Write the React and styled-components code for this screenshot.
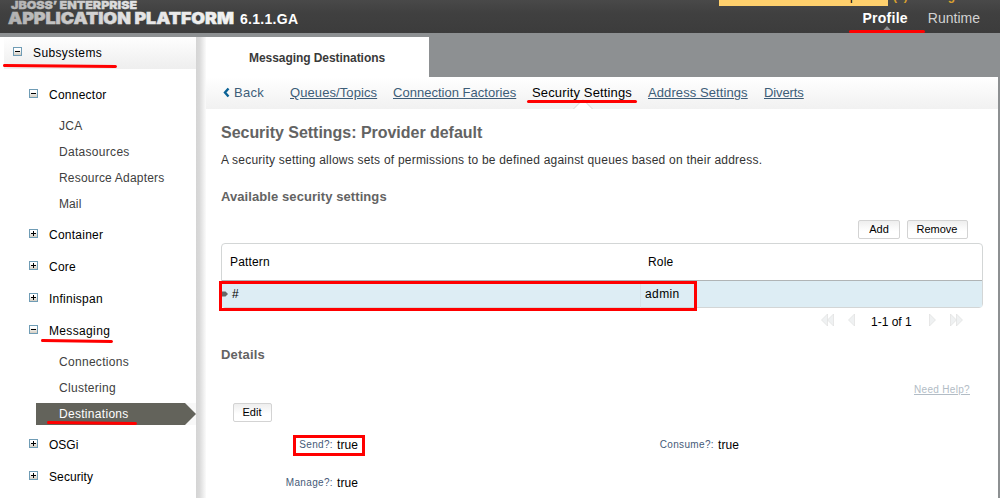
import React from "react";
import styled, { createGlobalStyle } from "styled-components";

const Global = createGlobalStyle`
  *, *::before, *::after { box-sizing: border-box; }
  body { margin: 0; font-family: "Liberation Sans", Arial, sans-serif; font-size: 12px; color: #000; background: #fff; }
  a { color: inherit; }
`;

const Page = styled.div`
  width: 1000px;
  height: 498px;
  overflow: hidden;
  display: flex;
  flex-direction: column;
`;

const Header = styled.header`
  position: relative;
  flex: none;
  height: 33px;
  display: flex;
  justify-content: space-between;
  background: linear-gradient(#494949, #404040 40%, #3c3c3c);
`;

const Brand = styled.svg`
  display: block;
  width: 320px;
  height: 33px;
`;

const Notice = styled.div`
  position: absolute;
  left: 719px;
  top: -10px;
  width: 169px;
  height: 16px;
  background: #ffd06d;
  line-height: 12px;
  padding-left: 131px;
  overflow: hidden;
`;

const Messages = styled.div`
  position: absolute;
  left: 893px;
  top: -11px;
  font-size: 12px;
  line-height: 14px;
  font-weight: bold;
  color: #d8a030;
`;

const TopNav = styled.nav`
  display: flex;
  padding: 9px 20px 0 0;
  gap: 20px;
  font-size: 14px;
  line-height: 18px;
`;

const TopItem = styled.div`
  position: relative;
  color: ${(p) => (p.$active ? "#fff" : "#d2d2d2")};
  font-weight: ${(p) => (p.$active ? "bold" : "normal")};
  letter-spacing: ${(p) => (p.$active ? "0.25px" : "0")};
`;

const Notch = styled.svg`
  position: absolute;
  left: 20px;
  top: 17px;
  width: 8px;
  height: 5px;
`;

const Mark = styled.svg`
  position: absolute;
  left: ${(p) => p.$x}px;
  top: ${(p) => p.$y}px;
  width: ${(p) => p.$w}px;
  height: 5px;
  overflow: visible;
  z-index: 2;
`;

const Body = styled.div`
  flex: 1;
  display: flex;
  border-top: 4px solid #8d9092;
  min-height: 0;
`;

const Sidebar = styled.aside`
  width: 196px;
  flex: none;
  padding-left: 4px;
`;

const Splitter = styled.div`
  width: 10px;
  flex: none;
  background: linear-gradient(90deg, #d4d4d4, #dadada 35%, #f6f6f6 90%, #fbfbfb);
`;

const SectionHead = styled.div`
  position: relative;
  display: flex;
  align-items: center;
  height: 32px;
  padding-left: 9px;
  gap: 11px;
  letter-spacing: 0.38px;
  background: linear-gradient(#fefefe, #f1f1f1 80%, #eee);
  svg:first-child { margin-top: -3px; }
`;

const Tree = styled.div`
  display: flex;
  flex-direction: column;
  padding-top: 10px;
`;

const Group = styled.div`
  padding-bottom: ${(p) => (p.$open ? "4px" : "0")};
`;

const Branch = styled.div`
  position: relative;
  height: 32px;
  display: flex;
  align-items: center;
  gap: 11px;
  padding-left: 25px;
  letter-spacing: ${(p) => p.$track || "0.25px"};
  svg:first-child { margin-top: -3px; }
`;

const Leaf = styled.div`
  position: relative;
  height: 22px;
  margin: 4px 0 0 32px;
  padding: 1px 0 0 23px;
  line-height: 21px;
  letter-spacing: ${(p) => p.$track || "0.3px"};
  color: ${(p) => (p.$active ? "#fff" : "#404040")};
  background: ${(p) => (p.$active ? "#f8f8f8" : "none")};
  span { position: relative; }
`;

const Arrow = styled.svg`
  position: absolute;
  left: 0;
  top: 0;
  width: 160px;
  height: 22px;
`;

const Main = styled.main`
  flex: 1;
  display: flex;
  flex-direction: column;
  border-right: 2px solid #8d9092;
`;

const TabStrip = styled.div`
  height: 40px;
  flex: none;
  background: #8d9092;
`;

const Tab = styled.div`
  width: 223px;
  height: 40px;
  background: #fff;
  color: #3a3a3a;
  font-weight: bold;
  line-height: 42px;
  padding-left: 43px;
  letter-spacing: -0.06px;
`;

const SubNav = styled.nav`
  height: 32px;
  flex: none;
  display: flex;
  padding-left: 17px;
  font-size: 13px;
  line-height: 31px;
  color: #3d5d78;
  background: linear-gradient(#fff, #f1f1f1);
`;

const NavLink = styled.a`
  position: relative;
  text-decoration: ${(p) => (p.$plain ? "none" : "underline")};
  color: ${(p) => (p.$active ? "#000" : "inherit")};
  width: ${(p) => p.$w}px;
  flex: none;
  white-space: nowrap;
  letter-spacing: ${(p) => p.$track || "0.09px"};
`;

const Caret = styled.svg`
  width: 7px;
  height: 11px;
  margin-right: 4px;
  vertical-align: -1px;
`;

const Peak = styled.svg`
  position: absolute;
  left: 41px;
  top: 22px;
  width: 20px;
  height: 10px;
`;

const Content = styled.section`
  display: flex;
  flex-direction: column;
  padding: 0 13px 0 15px;
`;

const Title = styled.h1`
  margin: 14px 0 0;
  font-size: 16px;
  line-height: 20px;
  color: #636363;
  letter-spacing: -0.03px;
`;

const Lead = styled.p`
  margin: 9px 0 0;
  line-height: 16px;
  color: #333;
  letter-spacing: 0.22px;
`;

const Subtitle = styled.h2`
  margin: ${(p) => p.$top}px 0 0;
  font-size: 13px;
  line-height: 16px;
  color: #636363;
  letter-spacing: ${(p) => p.$track || "0.08px"};
`;

const Tools = styled.div`
  display: flex;
  justify-content: flex-end;
  gap: 7px;
  padding-right: 17px;
  margin-top: 15px;
`;

const Button = styled.button`
  width: ${(p) => p.$w}px;
  height: 19px;
  padding: 0 ${(p) => (p.$nudge ? "1px" : "0")} 0 0;
  border: 1px solid #d3d3d3;
  border-radius: 2px;
  background: linear-gradient(#eee, #fff 60%);
  font: 11px/15px "Liberation Sans", Arial, sans-serif;
  color: #000;
`;

const Table = styled.div`
  position: relative;
  height: 65px;
  width: 762px;
  margin-top: 4px;
  border: 1px solid #d3d6d6;
  border-radius: 4px;
`;

const HeadRow = styled.div`
  display: grid;
  grid-template-columns: 418px 1fr;
  height: 37px;
  line-height: 36px;
  padding-left: 8px;
  border-bottom: 1px solid #b0b4b5;
  letter-spacing: 0.15px;
`;

const DataRow = styled.div`
  display: grid;
  grid-template-columns: 418px 1fr;
  height: 26px;
  line-height: 27px;
  background: #ddedf4;
`;

const Cell = styled.div`
  padding-left: ${(p) => p.$pad}px;
  border-left: ${(p) => (p.$edge ? "1px solid #d6e3e9" : "0")};
  letter-spacing: ${(p) => p.$track || "0"};
`;

const RowDot = styled.svg`
  position: absolute;
  left: 0;
  top: 47px;
  width: 6px;
  height: 6px;
`;

const Outline = styled.div`
  position: absolute;
  left: ${(p) => p.$x}px;
  top: ${(p) => p.$y}px;
  width: ${(p) => p.$w}px;
  height: ${(p) => p.$h}px;
  border: 3px solid #f00;
`;

const Pager = styled.div`
  display: flex;
  justify-content: flex-end;
  align-items: center;
  height: 20px;
  margin-top: 4px;
  padding-right: 22px;
  svg { display: block; margin-top: -5px; }
`;

const PagerText = styled.span`
  width: 41px;
  margin: 0 17px 0 16px;
  white-space: nowrap;
  margin-top: -1px;
`;

const Help = styled.a`
  align-self: flex-end;
  margin: 21px 15px 0 0;
  font-size: 10px;
  line-height: 12px;
  text-decoration: underline;
  color: #b2bcc5;
  letter-spacing: 0.32px;
`;

const EditBar = styled.div`
  display: flex;
  padding: 7px 0 0 12px;
`;

const Form = styled.dl`
  display: grid;
  grid-template-columns: 112px 261px 112px 1fr;
  grid-auto-rows: 38px;
  column-gap: 4px;
  margin: 4px 0 0;
  line-height: 38px;
`;

const Term = styled.dt`
  position: relative;
  text-align: right;
  font-size: 10px;
  color: #465a78;
  white-space: nowrap;
  letter-spacing: 0.35px;
`;

const Value = styled.dd`
  margin: 0;
  letter-spacing: 0.1px;
`;

const Toggle = ({ open }) => (
  <svg width="9" height="9" viewBox="0 0 9 9" shapeRendering="crispEdges">
    <defs>
      <linearGradient id="knob" x1="0" y1="0" x2="0" y2="1">
        <stop offset="0.3" stopColor="#fff" />
        <stop offset="1" stopColor="#cfc8bb" />
      </linearGradient>
    </defs>
    <rect x="0.5" y="0.5" width="8" height="8" fill="url(#knob)" stroke="#6f9cb5" />
    <rect x="2" y="4" width="5" height="1" fill="#000" />
    {!open && <rect x="4" y="2" width="1" height="5" fill="#000" />}
  </svg>
);

const Underline = ({ x, y, w, slope = 1 }) => (
  <Mark $x={x} $y={y} $w={w}>
    <path d={`M1.5 1.5 L${w - 1.5} ${1.5 + slope}`} stroke="#f00" strokeWidth="3" strokeLinecap="round" />
  </Mark>
);

const PageArrow = ({ double, back }) => {
  const tri = (x) => <path key={x} d={`M${x} 0 L${x + 6} 6 L${x} 12 Z`} fill="#eff1f2" stroke="#dcdcdc" strokeWidth="0.6" />;
  const w = double ? 13 : 7;
  return (
    <svg width={w} height="12" viewBox={`0 0 ${w} 12`}>
      <g transform={back ? `translate(${w} 0) scale(-1 1)` : undefined}>
        {tri(0.5)}
        {double && tri(6.5)}
      </g>
    </svg>
  );
};

const Space = styled.span`
  width: ${(p) => p.$w}px;
`;

export default function App() {
  return (
    <Page>
      <Global />
      <Header>
        <Brand viewBox="0 0 320 33">
          <defs>
            <linearGradient id="silver" gradientUnits="userSpaceOnUse" x1="8" y1="0" x2="235" y2="0">
              <stop offset="0" stopColor="#b0b0b0" />
              <stop offset="0.55" stopColor="#e4e4e4" />
              <stop offset="1" stopColor="#f2f2f2" />
            </linearGradient>
          </defs>
          <g fill="url(#silver)" stroke="url(#silver)" fontFamily="Inter, sans-serif" fontWeight="900">
            <text x="11" y="9" fontSize="11" strokeWidth="0.3" textLength="126" lengthAdjust="spacingAndGlyphs">JBOSS’ ENTERPRISE</text>
            <text x="8" y="24" fontSize="16.5" strokeWidth="0.5" textLength="226" lengthAdjust="spacingAndGlyphs">APPLICATION PLATFORM</text>
          </g>
          <text x="240" y="24" fontFamily="Liberation Sans, sans-serif" fontSize="14" fontWeight="bold" fill="#fff" textLength="58">6.1.1.GA</text>
        </Brand>
        <Notice>p</Notice>
        <Messages>(0) Messages</Messages>
        <TopNav>
          <TopItem $active>
            Profile
            <Notch viewBox="0 0 8 5"><path d="M0 4.5 L4 0 L8 4.5Z" fill="#8d9092" /></Notch>
            <Underline x={-14} y={21} w={76} slope={0} />
          </TopItem>
          <TopItem>Runtime</TopItem>
        </TopNav>
      </Header>
      <Body>
        <Sidebar>
          <SectionHead>
            <Toggle open />
            Subsystems
            <Underline x={-1} y={27} w={114} />
          </SectionHead>
          <Tree>
            <Group $open>
              <Branch><Toggle open />Connector</Branch>
              <Leaf>JCA</Leaf>
              <Leaf>Datasources</Leaf>
              <Leaf $track="0.2px">Resource Adapters</Leaf>
              <Leaf $track="0.1px">Mail</Leaf>
            </Group>
            <Branch><Toggle />Container</Branch>
            <Branch><Toggle />Core</Branch>
            <Branch><Toggle />Infinispan</Branch>
            <Group $open>
              <Branch $track="0.35px">
                <Toggle open />Messaging
                <Underline x={37} y={24} w={72} />
              </Branch>
              <Leaf>Connections</Leaf>
              <Leaf>Clustering</Leaf>
              <Leaf $active>
                <Arrow viewBox="0 0 160 22"><path d="M0 0H149L160 11L149 22H0Z" fill="#63635b" /></Arrow>
                <span>Destinations</span>
                <Underline x={11} y={18} w={90} />
              </Leaf>
            </Group>
            <Branch $track="0px"><Toggle />OSGi</Branch>
            <Branch $track="0.1px"><Toggle />Security</Branch>
          </Tree>
        </Sidebar>
        <Splitter />
        <Main>
          <TabStrip><Tab>Messaging Destinations</Tab></TabStrip>
          <SubNav>
            <NavLink $plain $w={67} $track="0.3px">
              <Caret viewBox="0 0 7 11"><path d="M5.5 1.5 L2 5.5 L5.5 9.5" fill="none" stroke="#0a6296" strokeWidth="2.4" /></Caret>
              Back
            </NavLink>
            <NavLink $w={103}>Queues/Topics</NavLink>
            <NavLink $w={139} $track="0.02px">Connection Factories</NavLink>
            <NavLink $plain $active $w={116} $track="0.14px">
              Security Settings
              <Peak viewBox="0 0 20 10"><path d="M0.5 10 L10 0.5 L19.5 10" fill="#fff" stroke="#d5d5d5" /></Peak>
              <Underline x={-5} y={23} w={110} slope={0} />
            </NavLink>
            <NavLink $w={116}>Address Settings</NavLink>
            <NavLink $w={60} $track="-0.1px">Diverts</NavLink>
          </SubNav>
          <Content>
            <Title>Security Settings: Provider default</Title>
            <Lead>A security setting allows sets of permissions to be defined against queues based on their address.</Lead>
            <Subtitle $top={21}>Available security settings</Subtitle>
            <Tools>
              <Button $w={42}>Add</Button>
              <Button $w={61} $nudge>Remove</Button>
            </Tools>
            <Table>
              <HeadRow><span>Pattern</span><span>Role</span></HeadRow>
              <DataRow>
                <Cell $pad={10}>#</Cell>
                <Cell $pad={4} $edge $track="0.4px">admin</Cell>
              </DataRow>
              <RowDot viewBox="0 0 6 6"><path d="M0 0.5H3.5L6 3L3.5 5.5H0Z" fill="#666" /></RowDot>
              <Outline $x={-3} $y={37} $w={478} $h={30} />
            </Table>
            <Pager>
              <PageArrow double back />
              <Space $w={14} />
              <PageArrow back />
              <PagerText>1-1 of 1</PagerText>
              <PageArrow />
              <Space $w={14} />
              <PageArrow double />
            </Pager>
            <Subtitle $top={15} $track="0.2px">Details</Subtitle>
            <Help>Need Help?</Help>
            <EditBar><Button $w={39} $nudge>Edit</Button></EditBar>
            <Form>
              <Term>Send?:<Outline $x={72} $y={9} $w={72} $h={21} /></Term>
              <Value>true</Value>
              <Term>Consume?:</Term>
              <Value>true</Value>
              <Term>Manage?:</Term>
              <Value>true</Value>
            </Form>
          </Content>
        </Main>
      </Body>
    </Page>
  );
}
